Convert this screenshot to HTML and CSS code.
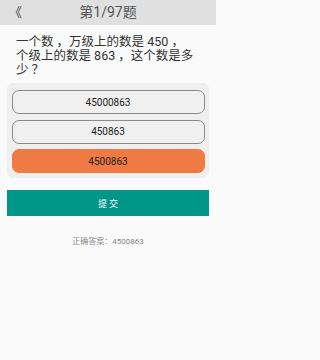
FILE: index.html
```html
<!DOCTYPE html>
<html lang="zh">
<head>
<meta charset="utf-8">
<link rel="stylesheet" href="styles.css">
</head>
<body>
<div class="header">
  <span class="back">《</span>
  <span class="title">第1/97题</span>
  <span></span>
</div>
<div class="question">一个数 ，万级上的数是 450 ，个级上的数是 863 ，这个数是多少 ？</div>
<div class="options">
  <div class="option">45000863</div>
  <div class="option">450863</div>
  <div class="option selected">4500863</div>
</div>
<div class="submit">提 交</div>
<div class="answer">正确答案：4500863</div>
</body>
</html>
```
FILE: styles.css
```css
html, body {
  margin: 0;
  padding: 0;
}
body {
  width: 216px;
  height: 360px;
  background: #fafafa;
  font-family: Roboto, "Noto Sans CJK SC", sans-serif;
  color: #333;
}
.header {
  height: 25px;
  background: #e0e0e0;
  display: grid;
  grid-template-columns: 1fr auto 1fr;
  align-items: center;
}
.back {
  font-size: 13px;
  color: #444;
  padding-left: 9px;
  line-height: 25px;
}
.title {
  font-size: 14px;
  color: #555;
  line-height: 25px;
}
.question {
  padding: 10px 20px 0 16px;
  font-size: 12.5px;
  line-height: 14px;
  color: #333;
}
.options {
  margin: 6px 7px 0;
  background: #efefef;
  border-radius: 6px;
  padding: 7px 4.5px 5px;
  display: flex;
  flex-direction: column;
  gap: 5.5px;
}
.option {
  height: 24px;
  box-sizing: border-box;
  border: 1px solid #8a8a8a;
  border-radius: 7px;
  background: #f0f0f0;
  display: flex;
  align-items: center;
  justify-content: center;
  font-size: 10px;
  color: #222;
}
.option.selected {
  background: #f07a43;
  border-color: #f07a43;
}
.submit {
  margin: 12px 7px 0;
  height: 26px;
  background: #009688;
  color: #fff;
  font-size: 9px;
  display: flex;
  align-items: center;
  justify-content: center;
}
.answer {
  margin-top: 21px;
  text-align: center;
  font-size: 8px;
  line-height: 10px;
  color: #888;
}
```
